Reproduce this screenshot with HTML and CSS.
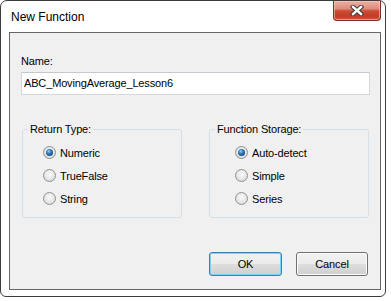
FILE: index.html
```html
<!DOCTYPE html>
<html>
<head>
<meta charset="utf-8">
<link rel="stylesheet" href="styles.css">
</head>
<body>
<div class="window">
  <div class="titlebar">
    <span class="title">New Function</span>
    <div class="close">
      <svg width="14" height="11" viewBox="0 0 14 11">
        <path d="M3 2 L11 9 M11 2 L3 9" stroke="#3a3a3a" stroke-width="4.4" stroke-linecap="square" fill="none"/>
        <path d="M3 2 L11 9 M11 2 L3 9" stroke="#ffffff" stroke-width="2.4" stroke-linecap="square" fill="none"/>
      </svg>
    </div>
  </div>
  <div class="client">
    <div class="name-label">Name:</div>
    <div class="textbox">ABC_MovingAverage_Lesson6</div>
    <div class="groups">
      <fieldset class="group">
        <legend>Return Type:</legend>
        <div class="options options-return">
          <div class="option"><span class="radio checked"></span>Numeric</div>
          <div class="option"><span class="radio"></span>TrueFalse</div>
          <div class="option"><span class="radio"></span>String</div>
        </div>
      </fieldset>
      <fieldset class="group">
        <legend>Function Storage:</legend>
        <div class="options options-storage">
          <div class="option"><span class="radio checked"></span>Auto-detect</div>
          <div class="option"><span class="radio"></span>Simple</div>
          <div class="option"><span class="radio"></span>Series</div>
        </div>
      </fieldset>
    </div>
    <div class="buttons">
      <div class="btn btn-default">OK</div>
      <div class="btn btn-cancel">Cancel</div>
    </div>
  </div>
</div>
</body>
</html>
```

FILE: styles.css
```css
* { box-sizing: border-box; }
html, body { margin: 0; padding: 0; background: #ffffff; }
body {
  font-family: "Liberation Sans", Arial, sans-serif;
  font-size: 11px;
  color: #000;
}
.window {
  width: 386px;
  height: 297px;
  border: 1px solid #3c3c3c;
  border-radius: 7px 7px 6px 6px;
  background: #ffffff;
  padding: 0 4px 6px 8px;
  display: flex;
  flex-direction: column;
}
.titlebar {
  height: 31px;
  display: flex;
  justify-content: space-between;
  align-items: flex-start;
  flex: none;
}
.title {
  font-size: 12px;
  line-height: 15px;
  margin: 9px 0 0 2px;
  color: #000;
}
.close {
  width: 48px;
  height: 20px;
  border: 1px solid #7c2f22;
  border-top: none;
  border-radius: 0 0 4px 4px;
  background: linear-gradient(#eab0a3 0%, #df8e7d 40%, #cc4d35 52%, #c13c25 80%, #d0593f 100%);
  box-shadow: inset 0 0 0 1px rgba(255, 210, 200, 0.55);
  display: flex;
  align-items: center;
  justify-content: center;
}
.close svg { display: block; }
.client {
  flex: 1;
  border: 1px solid #666666;
  background: #f0f0f0;
  padding: 22px 10px 0 11px;
  letter-spacing: -0.15px;
}
.name-label {
  line-height: 13px;
  margin-bottom: 4px;
}
.textbox {
  height: 23px;
  border: 1px solid #d4d8de;
  border-top-color: #c4c9d0;
  background: #ffffff;
  padding: 0 2px;
  line-height: 21px;
  white-space: nowrap;
}
.groups {
  display: grid;
  grid-template-columns: 160px 160px;
  justify-content: space-between;
  margin: 28px 1px 0 1px;
}
.group {
  margin: 0;
  padding: 0 0 7px 0;
  border: 1px solid #d5dfe5;
  border-radius: 3px;
  min-width: 0;
}
.group legend {
  margin-left: 5px;
  padding: 0 2px;
  line-height: 13px;
}
.options {
  padding-top: 5px;
}
.options-return { padding-left: 20px; }
.options-storage { padding-left: 25px; }
.option {
  height: 23px;
  display: flex;
  align-items: center;
  gap: 4px;
}
.radio {
  width: 13px;
  height: 13px;
  border-radius: 50%;
  border: 1px solid #8f9090;
  background: radial-gradient(circle at 50% 40%, #fafafa 0%, #e6e6e6 55%, #cfcfcf 100%);
  display: flex;
  align-items: center;
  justify-content: center;
  flex: none;
}
.radio.checked::after {
  content: "";
  width: 7px;
  height: 7px;
  border-radius: 50%;
  background: radial-gradient(circle at 40% 35%, #9fd6f5 0%, #2f7fc0 35%, #134f8a 70%, #0b3360 100%);
}
.buttons {
  display: flex;
  justify-content: flex-end;
  gap: 14px;
  margin: 34px 2px 0 0;
}
.btn {
  height: 24px;
  width: 72px;
  border: 1px solid #707070;
  border-radius: 3px;
  background: linear-gradient(#f2f2f2 0%, #ebebeb 48%, #dddddd 52%, #cfcfcf 100%);
  box-shadow: inset 0 0 0 1px #fbfbfb;
  display: flex;
  align-items: center;
  justify-content: center;
  line-height: 13px;
}
.btn-default {
  width: 73px;
  border-color: #3c7fb1;
  box-shadow: inset 0 0 0 1px #7ad3f5;
}
```
